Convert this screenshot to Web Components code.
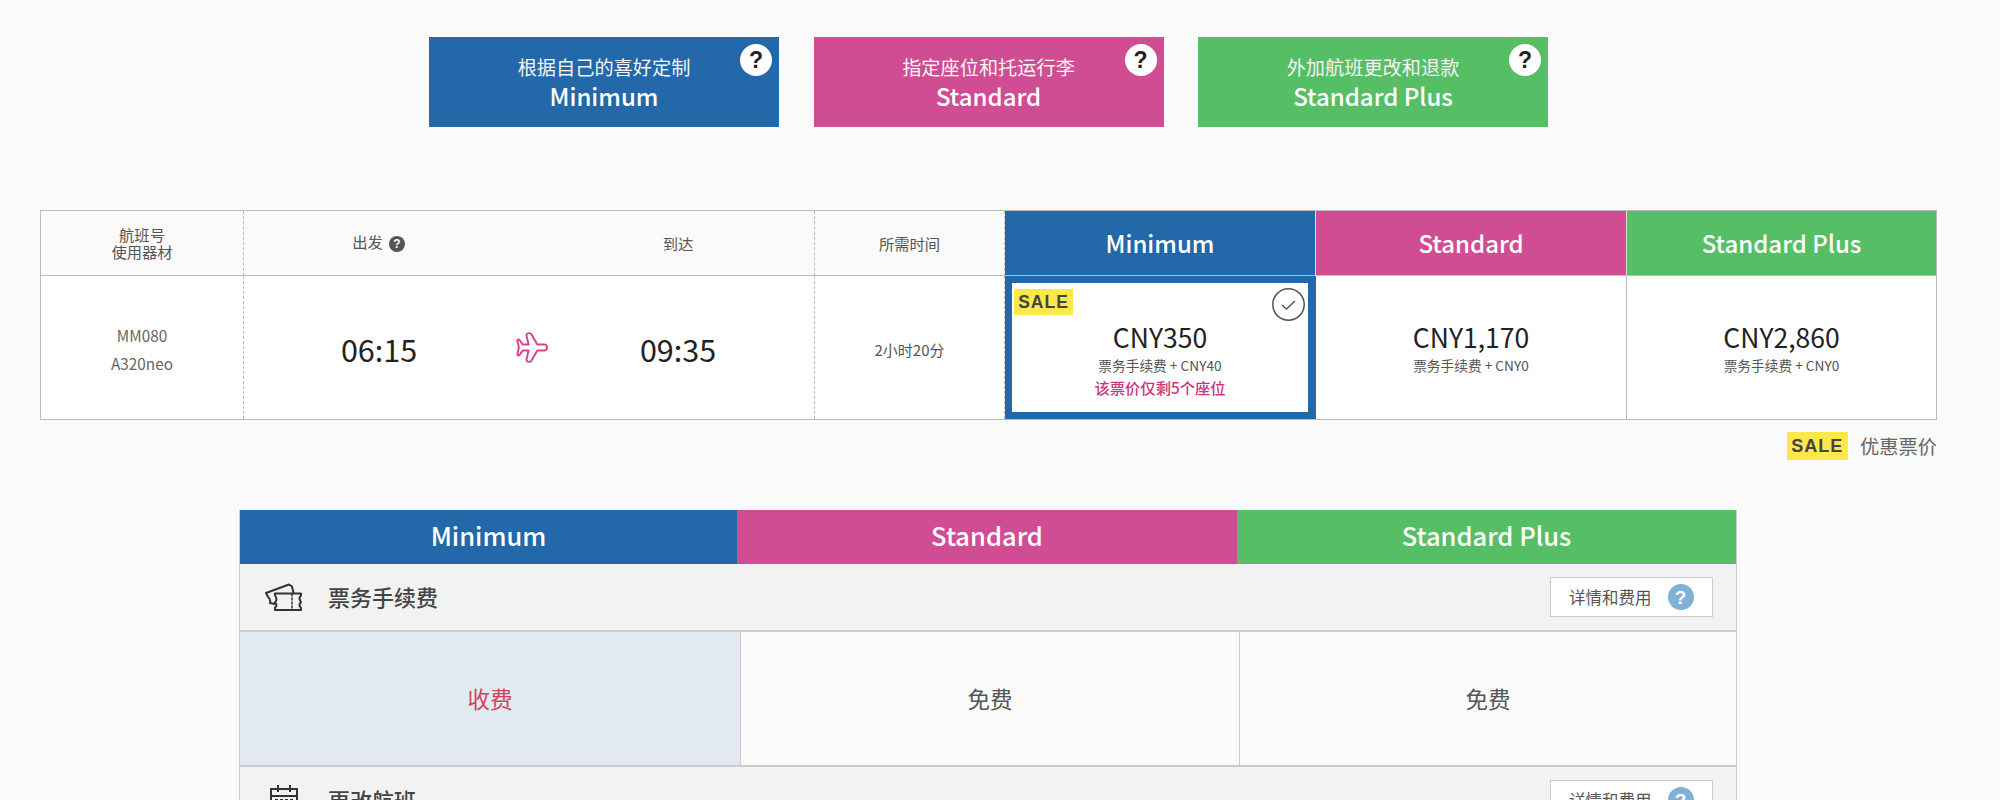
<!DOCTYPE html>
<html lang="zh-CN">
<head>
<meta charset="utf-8">
<title>Fares</title>
<style>
  html { overflow: hidden; }
  body {
    margin: 0;
    background: #fafafa;
    color: #555;
    font-family: "Noto Sans CJK SC", "Noto Sans", sans-serif;
  }
</style>
</head>
<body>
<fare-page>
  <plan-row>
    <plan-card color="#2368a8" title="Minimum">根据自己的喜好定制</plan-card>
    <plan-card color="#d14d93" title="Standard">指定座位和托运行李</plan-card>
    <plan-card color="#56bf66" title="Standard Plus">外加航班更改和退款</plan-card>
  </plan-row>

  <fare-table>
    <head-cell dashed><div>航班号<br>使用器材</div></head-cell>
    <head-cell dashed>
      <route-cols>
        <span slot="from">出发<help-dot size="16" bg="#555"></help-dot></span>
        <span slot="to">到达</span>
      </route-cols>
    </head-cell>
    <head-cell dashed>所需时间</head-cell>
    <fare-head color="#2368a8">Minimum</fare-head>
    <fare-head color="#d14d93">Standard</fare-head>
    <fare-head color="#56bf66" last>Standard Plus</fare-head>

    <info-cell dashed><aircraft-info flight="MM080" model="A320neo"></aircraft-info></info-cell>
    <info-cell dashed>
      <route-cols large>
        <span slot="from">06:15</span>
        <plane-icon slot="mid"></plane-icon>
        <span slot="to">09:35</span>
      </route-cols>
    </info-cell>
    <info-cell dashed>2小时20分</info-cell>
    <price-cell selected price="CNY350" fee="票务手续费 + CNY40" note="该票价仅剩5个座位"></price-cell>
    <price-cell price="CNY1,170" fee="票务手续费 + CNY0"></price-cell>
    <price-cell last price="CNY2,860" fee="票务手续费 + CNY0"></price-cell>
  </fare-table>

  <sale-legend>优惠票价</sale-legend>

  <compare-table>
    <compare-head></compare-head>
    <compare-row label="票务手续费" icon="ticket">
      <compare-cell active charged>收费</compare-cell>
      <compare-cell>免费</compare-cell>
      <compare-cell last>免费</compare-cell>
    </compare-row>
    <compare-row label="更改航班" icon="calendar">
      <compare-cell active>收费</compare-cell>
      <compare-cell>收费</compare-cell>
      <compare-cell last>免费</compare-cell>
    </compare-row>
  </compare-table>
</fare-page>

<script>
function define(name, css, html, init) {
  customElements.define(name, class extends HTMLElement {
    connectedCallback() {
      if (this.shadowRoot) return;
      this.attachShadow({ mode: 'open' });
      this.shadowRoot.innerHTML = '<style>' + css + '</style>' + (typeof html === 'function' ? html(this) : html);
      if (init) init(this);
    }
  });
}
const attr = (el, name) => el.getAttribute(name) || '';

define('fare-page', `
  :host { display: block; width: 1977px; padding-top: 37px; }
`, '<slot></slot>');

define('plan-row', `
  :host { display: flex; justify-content: center; gap: 34.5px; }
`, '<slot></slot>');

define('help-dot', `
  :host { display: inline-flex; vertical-align: 0; margin-left: 6px; }
  div {
    display: flex; align-items: center; justify-content: center;
    border-radius: 50%; font-family: "Liberation Sans", sans-serif; font-weight: 700; line-height: 1;
  }
`, el => {
  const s = +attr(el, 'size');
  return `<div style="width:${s}px;height:${s}px;background:${attr(el, 'bg')};color:${attr(el, 'fg') || '#fff'};font-size:${Math.round(s * 0.72)}px">?</div>`;
});

define('plan-card', `
  :host { display: block; position: relative; width: 350px; height: 90px; color: #fff; text-align: center; box-sizing: border-box; padding-top: 16px; }
  .sub { font-size: 19.2px; line-height: 28px; color: #f4f4f4; }
  .name { font-size: 24px; font-weight: 500; line-height: 34px; margin-top: -2px; }
  help-dot { position: absolute; top: 7px; right: 7px; }
`, el => `
  <div class="sub"><slot></slot></div>
  <div class="name">${attr(el, 'title')}</div>
  <help-dot size="32" bg="#fff" fg="#222"></help-dot>`,
  el => { el.style.background = attr(el, 'color'); el.removeAttribute('title'); });

define('fare-table', `
  :host {
    display: grid; box-sizing: border-box; width: 1897px; margin: 83px 0 0 40px;
    grid-template-columns: 203px 571px 190px 311px 311px 1fr;
    grid-template-rows: 65px 143px;
    border: 1px solid #bbb;
  }
`, '<slot></slot>');

define('head-cell', `
  :host {
    display: flex; align-items: center; justify-content: center; box-sizing: border-box;
    text-align: center; font-size: 15.3px; line-height: 17px; color: #555;
    border-bottom: 1px solid #bbb; border-right: 1px dashed #bbb;
  }
`, '<slot></slot>');

define('info-cell', `
  :host {
    display: flex; align-items: center; justify-content: center; box-sizing: border-box;
    background: #fff; font-size: 15px; color: #555; padding-top: 3px;
    border-right: 1px dashed #bbb;
  }
`, '<slot></slot>');

define('fare-head', `
  :host {
    display: flex; align-items: center; justify-content: center; box-sizing: border-box;
    color: #fff; font-size: 24px; font-weight: 500; padding-bottom: 1px;
    border-bottom: 1px solid #bbb; border-right: 1px solid #ddd;
  }
  :host([last]) { border-right: 0; }
`, '<slot></slot>', el => { el.style.background = attr(el, 'color'); });

define('route-cols', `
  :host { display: grid; grid-template-columns: 272px 32px 1fr; align-items: center; width: 100%; text-align: center; }
  .to { padding-right: 6px; }
  .mid { display: flex; }
  :host(:not([large])) .from { padding-right: 3px; margin-top: -2px; }
  :host([large]) { font-size: 30.5px; color: #222; line-height: 40px; }
  :host([large]) .from { padding-right: 2px; }
`, `<div class="from"><slot name="from"></slot></div><div class="mid"><slot name="mid"></slot></div><div class="to"><slot name="to"></slot></div>`);

define('aircraft-info', `
  :host { display: block; text-align: center; font-size: 15.3px; line-height: 28px; color: #666; margin-top: -1px; }
`, el => `<div>${attr(el, 'flight')}</div><div>${attr(el, 'model')}</div>`);

define('plane-icon', `
  :host { display: block; width: 32px; height: 31px; margin-top: -4px; }
  svg { display: block; }
`, `<svg width="32" height="31" viewBox="0 0 33 31" fill="none" stroke="#d6408f" stroke-width="2" stroke-linejoin="round">
  <path d="M30 12.5H22L16 2Q14.5 0 12 1Q10.5 1.5 11 4L13 12.5H7L3.5 7.5Q1.5 6.5 1.5 9L3 15.5L1.5 22Q1.5 24.5 3.5 23.5L7 18.5H13L11 27Q10.5 29.5 12 30Q14.5 31 16 29L22 18.5H30Q32 18 32 15.5Q32 13 30 12.5Z"/>
</svg>`);

define('sale-tag', `
  :host {
    display: inline-flex; align-items: center; justify-content: center; box-sizing: border-box;
    background: #fde84c; color: #444; font-family: "Liberation Sans", sans-serif; font-weight: 700;
    letter-spacing: 1px;
  }
`, '<slot></slot>');

define('price-cell', `
  :host {
    display: block; position: relative; box-sizing: border-box; background: #fff; text-align: center;
    padding-top: 44px; border-right: 1px solid #bbb;
  }
  :host([selected]) { border: 7px solid #2368a8; border-right-width: 8px; padding-top: 37px; }
  :host([last]) { border-right: 0; }
  .price { font-size: 26.5px; line-height: 34px; color: #222; }
  .fee { font-size: 13.7px; line-height: 22px; color: #555; }
  .note { font-size: 15.3px; line-height: 22px; color: #c9357f; font-weight: 500; }
  sale-tag { position: absolute; top: 6px; left: 2px; width: 59px; height: 26px; font-size: 17.5px; }
  svg { position: absolute; top: 5px; right: 3px; }
`, el => `
  ${el.hasAttribute('selected') ? `<sale-tag>SALE</sale-tag>
  <svg width="33" height="33" viewBox="0 0 33 33" fill="none" stroke="#555" stroke-width="1.5"><circle cx="16.5" cy="16.5" r="15.7"/><path d="M10 17L14.5 21L23 13"/></svg>` : ''}
  <div class="price">${attr(el, 'price')}</div>
  <div class="fee">${attr(el, 'fee')}</div>
  ${attr(el, 'note') ? `<div class="note">${attr(el, 'note')}</div>` : ''}`);

define('sale-legend', `
  :host {
    display: flex; justify-content: flex-end; align-items: center; gap: 12px; box-sizing: border-box;
    width: 1937px; margin-top: 12px; height: 28px; font-size: 19.3px; color: #666;
  }
  sale-tag { width: 61px; height: 28px; font-size: 18px; }
`, '<sale-tag>SALE</sale-tag><span><slot></slot></span>');

define('compare-table', `
  :host {
    display: block; box-sizing: border-box; width: 1498px; margin: 50px 0 0 239px;
    border-left: 1px solid #ccc; border-right: 1px solid #ccc;
  }
`, '<slot></slot>');

define('compare-head', `
  :host { display: grid; grid-template-columns: 497px 500px 1fr; height: 54px; color: #fff; font-size: 25.5px; font-weight: 500; text-align: center; line-height: 50px; }
  .a { background: #2368a8; } .b { background: #d14d93; } .c { background: #56bf66; }
`, '<div class="a">Minimum</div><div class="b">Standard</div><div class="c">Standard Plus</div>');

const rowIcons = {
  ticket: `<svg width="38" height="29" viewBox="0 0 38 29" fill="none" stroke="#333" stroke-width="2" stroke-linejoin="round" stroke-linecap="round">
    <path d="M10 27V24.5Q13 22.5 10 19.5Q13 16.5 10 12.5V10.5H36V12.5Q33 15 36 19Q33 22 36 25V27Z"/>
    <path d="M10 21L5 20Q6 16 3 14L1 10L24 1.5L27 3.5L28.5 10"/>
    <path d="M27 11V26" stroke-width="1.5" stroke-dasharray="2 2"/>
  </svg>`,
  calendar: `<svg width="28" height="30" viewBox="0 0 28 30" fill="none" stroke="#333" stroke-width="2">
    <rect x="1" y="4" width="26" height="25"/><path d="M1 11H27M8 0V7M20 0V7"/>
    <path d="M5 15H23M5 20H23" stroke-dasharray="3 2"/>
  </svg>`
};

define('compare-row', `
  :host { display: block; }
  .head {
    display: flex; align-items: center; box-sizing: border-box; height: 68px; padding: 0 23px 0 25px;
    background: #f2f2f2; border-bottom: 2px solid #ccc;
  }
  .ico { width: 38px; display: flex; justify-content: center; }
  .label { margin-left: 25px; margin-top: -2px; flex: 1; font-size: 22px; font-weight: 500; color: #444; }
  button {
    display: flex; align-items: center; box-sizing: border-box; width: 163px; height: 40px; padding: 0 0 0 18px;
    background: #fff; border: 1px solid #ccc; font: inherit; font-size: 16.5px; color: #555;
  }
  help-dot { margin-left: 16px; }
  .cells { display: grid; grid-template-columns: 501px 499px 1fr; height: 135px; }
`, el => `
  <div class="head">
    <div class="ico">${rowIcons[attr(el, 'icon')]}</div>
    <div class="label">${attr(el, 'label')}</div>
    <button>详情和费用<help-dot size="26" bg="#7fb2d4"></help-dot></button>
  </div>
  <div class="cells"><slot></slot></div>`);

define('compare-cell', `
  :host {
    display: flex; align-items: center; justify-content: center; box-sizing: border-box;
    font-size: 22.5px; color: #555; background: #fafafa; padding-bottom: 2px;
    border-bottom: 2px solid #ccc; border-right: 1px solid #ccc;
  }
  :host([active]) { background: #e2e9f0; }
  :host([charged]) { color: #d0435a; }
  :host([last]) { border-right: 0; }
`, '<slot></slot>');
</script>
</body>
</html>
